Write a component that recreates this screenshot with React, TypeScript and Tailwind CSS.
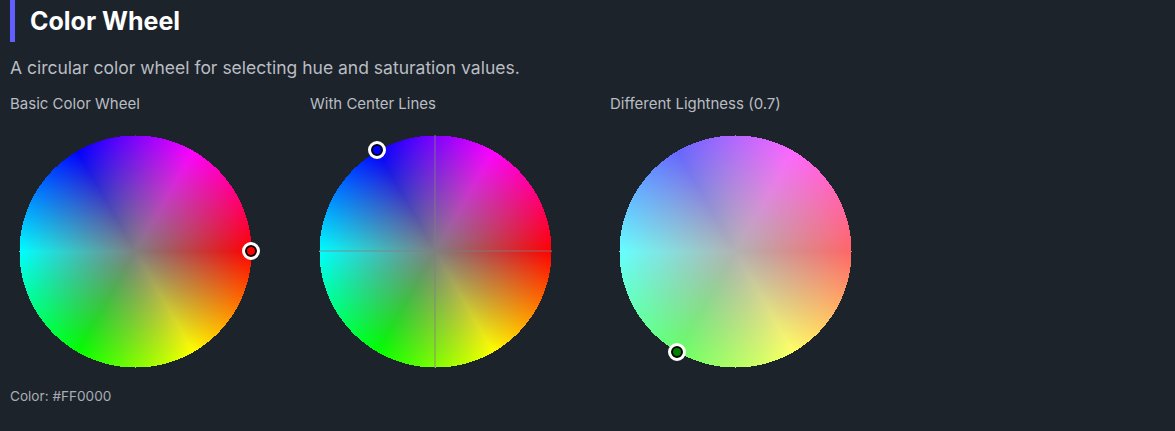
import { useEffect, useRef } from 'react';

const SIZE = 250;
const RADIUS = 116;

// hsl -> rgb, all inputs 0..1 except hue in degrees
function hslToRgb(h: number, s: number, l: number) {
  const c = (1 - Math.abs(2 * l - 1)) * s;
  const hp = h / 60;
  const x = c * (1 - Math.abs((hp % 2) - 1));
  let rgb = [0, 0, 0];
  if (hp < 1) rgb = [c, x, 0];
  else if (hp < 2) rgb = [x, c, 0];
  else if (hp < 3) rgb = [0, c, x];
  else if (hp < 4) rgb = [0, x, c];
  else if (hp < 5) rgb = [x, 0, c];
  else rgb = [c, 0, x];
  const m = l - c / 2;
  return rgb.map((v) => Math.round((v + m) * 255));
}

function Wheel({
  lightness = 0.5,
  centerLines = false,
  markerClass,
  markerColor,
}: {
  lightness?: number;
  centerLines?: boolean;
  markerClass: string;
  markerColor: string;
}) {
  const ref = useRef<HTMLCanvasElement>(null);

  useEffect(() => {
    const ctx = ref.current?.getContext('2d');
    if (!ctx) return;
    const mid = SIZE / 2;
    for (let dy = -RADIUS; dy <= RADIUS; dy++) {
      for (let dx = -RADIUS; dx <= RADIUS; dx++) {
        const dist = Math.sqrt(dx * dx + dy * dy);
        if (dist > RADIUS) continue;
        const hue = ((Math.atan2(dy, dx) * 180) / Math.PI + 360) % 360;
        const [r, g, b] = hslToRgb(hue, dist / RADIUS, lightness);
        ctx.fillStyle = `rgb(${r},${g},${b})`;
        ctx.fillRect(mid + dx, mid + dy, 1, 1);
      }
    }
    if (centerLines) {
      ctx.strokeStyle = 'rgba(128,128,128,0.8)';
      ctx.lineWidth = 1;
      ctx.beginPath();
      ctx.moveTo(mid - RADIUS, mid);
      ctx.lineTo(mid + RADIUS + 1, mid);
      ctx.moveTo(mid, mid - RADIUS);
      ctx.lineTo(mid, mid + RADIUS + 1);
      ctx.stroke();
    }
  }, [lightness, centerLines]);

  return (
    <div className="relative w-[250px] h-[250px]">
      <canvas ref={ref} width={SIZE} height={SIZE} className="block" />
      <div
        className={`absolute w-[18px] h-[18px] rounded-full border-[3px] border-white shadow-[inset_0_0_0_2px_#000] ${markerClass}`}
        style={{ backgroundColor: markerColor }}
      />
    </div>
  );
}

export default function App() {
  return (
    <div className="h-[431px] overflow-hidden bg-[#1c232b] px-[10px] font-['Inter',sans-serif]">
      {/* Section heading */}
      <h2 className="h-[42px] border-l-[5px] border-[#615fff] pl-[15px] text-[25px] leading-[42px] font-bold text-white">
        Color Wheel
      </h2>
      <p className="mt-[14px] text-[17.5px] leading-6 text-[#b9bdc2]">
        A circular color wheel for selecting hue and saturation values.
      </p>

      <div className="mt-[14px] flex">
        <div className="w-[300px]">
          <div className="text-[15px] leading-5 text-[#b9bdc2]">Basic Color Wheel</div>
          <div className="mt-[12px]">
            <Wheel markerClass="left-[232px] top-[116px]" markerColor="#ff0000" />
          </div>
          <div className="mt-[10px] text-[13.6px] leading-5 text-[#a9adb3]">Color: #FF0000</div>
        </div>
        <div className="w-[300px]">
          <div className="text-[15px] leading-5 text-[#b9bdc2]">With Center Lines</div>
          <div className="mt-[12px]">
            <Wheel centerLines markerClass="left-[58px] top-[15px]" markerColor="#0000ff" />
          </div>
        </div>
        <div className="w-[300px]">
          <div className="text-[15px] leading-5 text-[#b9bdc2]">Different Lightness (0.7)</div>
          <div className="mt-[12px]">
            <Wheel lightness={0.7} markerClass="left-[58px] top-[217px]" markerColor="#008000" />
          </div>
        </div>
      </div>
    </div>
  );
}
